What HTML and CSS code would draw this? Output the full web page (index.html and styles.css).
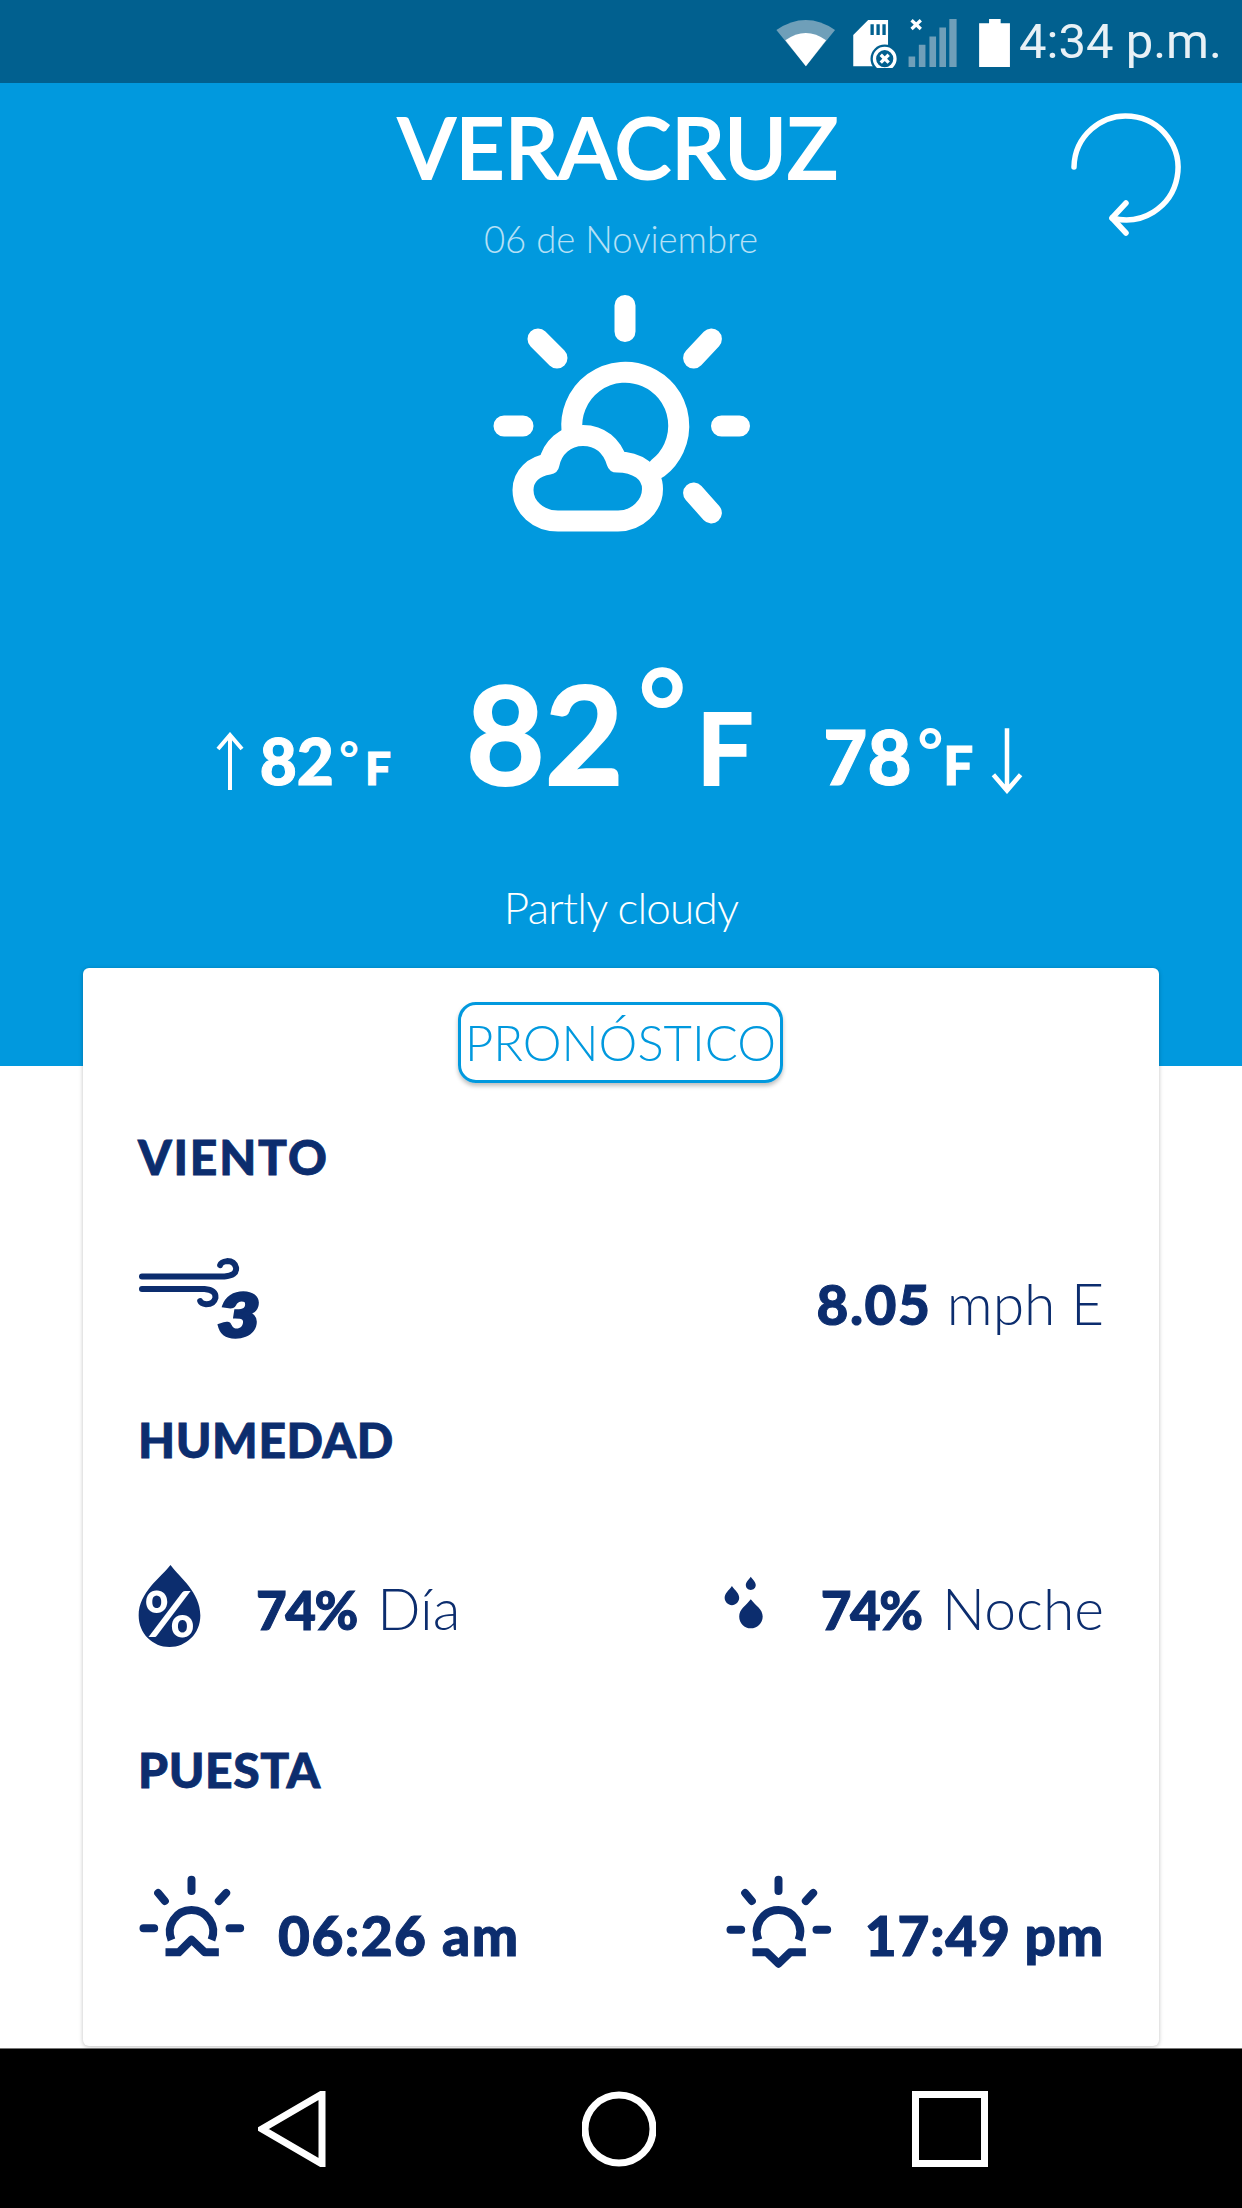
FILE: index.html
```html
<!DOCTYPE html>
<html lang="es">
  <head>
    <meta charset="UTF-8">
    <title>Clima Veracruz</title>
    <link rel="stylesheet" href="styles.css">
  </head>
  <body>
    <div class="page">
      <div class="status-bar">
        <svg class="status-icons" viewBox="100 40 720 160">
          <path class="dim" d="M108 85Q197 25 285 85L197 195Z"/>
          <path class="lit" d="M135 116Q197 72 258 116L197 195Z"/>
          <path class="lit" d="M385 55H445V195H340V100Z"/>
          <path class="bar" d="M392 68H402V100H392ZM410 68H420V100H410ZM428 68H438V100H428Z"/>
          <circle class="bar" cx="435" cy="172" r="43"/>
          <circle class="ring" cx="435" cy="172" r="31"/>
          <path class="ring" d="M423 160L447 184M447 160L423 184"/>
          <path class="mark" d="M516 56L544 82M544 56L516 82"/>
          <path class="dim" d="M507 165H527V197H507ZM538 130H558V197H538ZM570 105H590V197H570ZM600 78H620V197H600ZM630 52H652V197H630Z"/>
          <path class="lit" d="M750 52H785V65H813V197H720V65H750Z"/>
        </svg>
        <span class="clock">4:34 p.m.</span>
      </div>

      <div class="hero">
        <svg class="refresh" viewBox="1060 100 130 145">
          <path d="M1074 167A52 52 0 1 1 1112 218"/>
          <path d="M1126 203L1112 218L1126 233"/>
        </svg>
        <h1 class="city">VERACRUZ</h1>
        <p class="date">06 de Noviembre</p>
        <svg class="weather-icon" viewBox="480 290 290 245">
          <path d="M625 305.500V331.500M504 426H523M721.500 426H739.500M538 339L557 358M711.400 339L693.600 358M693.600 493L711.400 513"/>
          <path d="M572 431A53.500 53.500 0 1 1 658 468"/>
          <path d="M558 521H618C637 521 652.500 506 652.500 489C652.500 472 637 462 617 462C612 446 600 435.500 583 435.500C565 435.500 552 448 549 464C534 466 523 476 523 490C523 507 538 521 558 521Z"/>
        </svg>
        <div class="temps">
          <div class="temp temp-high">
            <svg class="arrow" viewBox="0 0 30 60"><path d="M15 58V3M3 17L15 3L27 17"/></svg>
            <span class="num">82</span><span class="deg">°</span><span class="unit">F</span>
          </div>
          <div class="temp temp-now">
            <span class="num">82</span><span class="deg">°</span><span class="unit">F</span>
          </div>
          <div class="temp temp-low">
            <span class="num">78</span><span class="deg">°</span><span class="unit">F</span>
            <svg class="arrow" viewBox="0 0 30 60"><path d="M15 2V57M3 43L15 57L27 43"/></svg>
          </div>
        </div>
        <p class="summary">Partly cloudy</p>
      </div>

      <div class="sheet">
        <div class="card">
          <div class="tab">PRONÓSTICO</div>

          <div class="section wind">
            <h2 class="label">VIENTO</h2>
            <div class="row">
              <svg class="wind-icon" viewBox="50 50 400 300">
                <path d="M62 114H310Q347 112 345 88Q340 68 318 68Q300 70 297 80"/>
                <path d="M62 152H250Q285 155 283 178Q278 198 255 198Q240 196 237 188"/>
                <text transform="translate(288 295) scale(1.200 1)">3</text>
              </svg>
              <div class="value"><b>8.05</b> mph E</div>
            </div>
          </div>

          <div class="section humidity">
            <h2 class="label">HUMEDAD</h2>
            <div class="row">
              <div class="pair">
                <svg class="drop-icon" viewBox="50 60 190 260">
                  <path d="M148 68C120 105 52 150 52 220C52 275 95 315 145 315C195 315 238 275 238 220C238 150 175 105 148 68Z"/>
                  <text x="145" y="285">%</text>
                </svg>
                <div class="value"><b>74%</b> Día</div>
              </div>
              <div class="pair">
                <svg class="drops-icon" viewBox="70 55 130 170">
                  <path d="M157 62C150 72 142 78 142 87C142 96 149 102 157 102C165 102 172 96 172 87C172 78 164 72 157 62Z"/>
                  <path d="M100 90C90 104 78 112 78 126C78 138 88 148 100 148C112 148 122 138 122 126C122 112 110 104 100 90Z"/>
                  <path d="M157 130C142 150 122 160 122 182C122 202 138 218 157 218C176 218 193 202 193 182C193 160 172 150 157 130Z"/>
                </svg>
                <div class="value"><b>74%</b> Noche</div>
              </div>
            </div>
          </div>

          <div class="section sun">
            <h2 class="label">PUESTA</h2>
            <div class="row">
              <div class="pair">
                <svg class="sun-icon" viewBox="50 45 320 285">
                  <path d="M210 62V96M66 208H98M324 208H356M110 102L130 126M314 102L292 126"/>
                  <path class="thin" d="M150 243A65 65 0 1 1 270 243"/>
                  <path class="thin" d="M132 280H172L210 242L250 280H292"/>
                </svg>
                <div class="value"><b>06:26 am</b></div>
              </div>
              <div class="pair">
                <svg class="sun-icon" viewBox="50 45 320 285">
                  <path d="M210 62V96M66 212H98M324 212H356M110 102L130 126M314 102L292 126"/>
                  <path class="thin" d="M150 243A65 65 0 1 1 270 243"/>
                  <path class="thin" d="M132 280H175L210 314L245 280H292"/>
                </svg>
                <div class="value"><b>17:49 pm</b></div>
              </div>
            </div>
          </div>
        </div>
      </div>

      <div class="nav-bar">
        <svg class="nav-icon" viewBox="0 0 68 76"><path d="M64 3V73L4 38Z"/></svg>
        <svg class="nav-icon" viewBox="0 0 74 76"><circle cx="37" cy="38" r="34"/></svg>
        <svg class="nav-icon" viewBox="0 0 76 76"><path d="M3.500 3.500H72.500V72.500H3.500Z"/></svg>
      </div>
    </div>
  </body>
</html>
```

FILE: styles.css
```css
* {
  margin: 0;
  padding: 0;
  box-sizing: border-box;
}

body {
  background: #fff;
  font-family: "Lato", "Open Sans", sans-serif;
}

svg {
  display: block;
  flex: none;
}

.page {
  width: 1242px;
  height: 2208px;
  display: flex;
  flex-direction: column;
  overflow: hidden;
}

/* status bar */
.status-bar {
  height: 83px;
  background: #01608f;
  display: flex;
  align-items: center;
  justify-content: flex-end;
  padding-right: 20px;
  color: #e8f1f6;
  font-family: "Roboto", sans-serif;
  font-size: 49px;
}

.status-icons {
  width: 240px;
  height: 53px;
  margin-right: 6px;
}

.status-icons .lit { fill: #fff; }
.status-icons .dim { fill: #6f9fb9; }
.status-icons .bar { fill: #01608f; }
.status-icons .ring { fill: none; stroke: #fff; stroke-width: 10; }
.status-icons .mark { fill: none; stroke: #fff; stroke-width: 10; }

/* hero */
.hero {
  position: relative;
  height: 983px;
  flex: none;
  background: #0199de;
  color: #fff;
  padding-top: 18px;
  display: flex;
  flex-direction: column;
  align-items: center;
}

.refresh {
  position: absolute;
  top: 17px;
  right: 52px;
  width: 130px;
  height: 145px;
  fill: none;
  stroke: #fff;
  stroke-width: 5.500;
  stroke-linecap: round;
  stroke-linejoin: round;
}

.city {
  font-size: 85px;
  line-height: 90px;
  font-weight: 500;
  -webkit-text-stroke: 2px #fff;
  margin-left: -6px;
}

.date {
  margin-top: 26px;
  font-size: 36.500px;
  line-height: 44px;
  font-weight: 300;
  color: #b5e0f6;
}

.weather-icon {
  margin-top: 29px;
  margin-left: 8px;
  width: 290px;
  height: 245px;
  fill: none;
  stroke: #fff;
  stroke-width: 21;
  stroke-linecap: round;
  stroke-linejoin: round;
}

.temps {
  margin: 130px 0 0 -3px;
  display: flex;
  align-items: baseline;
  line-height: 136px;
  font-weight: 900;
}

.temp {
  display: flex;
  align-items: baseline;
  -webkit-text-stroke: 1px #fff;
}

.temp-now {
  margin: 0 70px 0 75px;
  font-size: 136px;
  font-weight: 700;
  -webkit-text-stroke: 2px #fff;
}

.temp-now .deg {
  font-size: 118px;
  margin: 0 10px 0 14px;
  line-height: 1;
  transform: translateY(-30px);
}

.temp-now .unit {
  font-size: 100px;
}

.temp-high {
  font-size: 64px;
}

.temp-high .deg {
  font-size: 48px;
  margin-left: 5px;
  transform: translateY(-9px);
}

.temp-high .unit {
  font-size: 46px;
  margin-left: 6px;
}

.temp-low {
  font-size: 76px;
}

.temp-low .deg {
  font-size: 62px;
  margin-left: 6px;
  transform: translateY(-12px);
}

.temp-low .unit {
  font-size: 53px;
}

.deg {
  font-weight: 700;
  -webkit-text-stroke: 0;
}

.arrow {
  width: 30px;
  height: 60px;
  fill: none;
  stroke: #fff;
  stroke-width: 4;
  transform: translateY(7px);
}

.temp-high .arrow {
  margin-right: 15px;
}

.temp-low .arrow {
  width: 34px;
  height: 68px;
  margin-left: 17px;
  transform: translateY(9px);
}

.summary {
  margin-top: 43px;
  font-size: 44px;
  line-height: 56px;
  font-weight: 300;
  letter-spacing: -.8px;
}

/* card */
.sheet {
  flex: 1;
  background: #fff;
}

.card {
  width: 1076px;
  height: 1078px;
  margin: -98px 0 0 83px;
  padding: 34px 55px 0;
  position: relative;
  background: #fff;
  border-radius: 6px;
  box-shadow: 0 1px 4px rgba(0, 0, 0, .25);
  color: #0c2d6e;
}

.tab {
  width: 325px;
  height: 81px;
  margin-left: 320px;
  border: 3px solid #0199de;
  border-radius: 18px;
  box-shadow: 0 3px 4px rgba(0, 0, 0, .25);
  color: #0199de;
  font-size: 49px;
  font-weight: 300;
  line-height: 75px;
  text-align: center;
}

.label {
  font-size: 48px;
  line-height: 50px;
  font-weight: 900;
  letter-spacing: .6px;
  -webkit-text-stroke: .8px #0c2d6e;
}

.row {
  height: 100px;
  display: flex;
  align-items: center;
  justify-content: space-between;
}

.pair {
  display: flex;
  align-items: center;
}

.value {
  font-size: 57px;
  font-weight: 300;
}

.value b {
  font-size: 55px;
  font-weight: 900;
  letter-spacing: 1.500px;
  -webkit-text-stroke: 1px #0c2d6e;
}

.wind { padding-top: 49px; }
.wind .row { margin-top: 71px; }
.wind .label { letter-spacing: 1.800px; }

.humidity { padding-top: 62px; }
.humidity .row { margin-top: 93px; }
.humidity .value b {
  font-size: 53px;
  letter-spacing: -1.500px;
  margin-right: 5px;
}

.sun { padding-top: 87px; }
.sun .row { margin-top: 89px; }
.sun .pair:last-child b { letter-spacing: .8px; }

.wind-icon {
  width: 133px;
  height: 100px;
  margin-bottom: -4px;
  fill: none;
  stroke: #0c2d6e;
  stroke-width: 18;
  stroke-linecap: round;
}

.wind-icon text {
  fill: #0c2d6e;
  stroke-width: 10;
  font-size: 185px;
  font-weight: 900;
  font-style: italic;
}

.drop-icon {
  width: 63px;
  height: 87px;
  margin: 0 55px 6px 0;
  fill: #0c2d6e;
}

.drop-icon text {
  fill: #fff;
  font-size: 190px;
  font-weight: 700;
  text-anchor: middle;
}

.drops-icon {
  width: 43px;
  height: 57px;
  margin: 0 56px 12px 0;
  fill: #0c2d6e;
}

.sun-icon {
  width: 107px;
  height: 95px;
  margin-right: 33px;
  margin-bottom: 26px;
  fill: none;
  stroke: #0c2d6e;
  stroke-width: 24;
  stroke-linecap: round;
  stroke-linejoin: round;
}

.sun-icon .thin {
  stroke-width: 24;
  stroke-linecap: butt;
}

/* nav */
.nav-bar {
  height: 160px;
  flex: none;
  background: #000;
  border-top: 1px solid #777;
  display: flex;
  justify-content: center;
  align-items: flex-start;
  gap: 256px;
  padding: 42px 0 0 4px;
}

.nav-icon {
  height: 76px;
  width: auto;
  fill: none;
  stroke: #fff;
  stroke-width: 7;
}

.nav-icon:nth-child(1) { width: 68px; }
.nav-icon:nth-child(2) { width: 74px; }
.nav-icon:nth-child(3) { width: 76px; }
```
